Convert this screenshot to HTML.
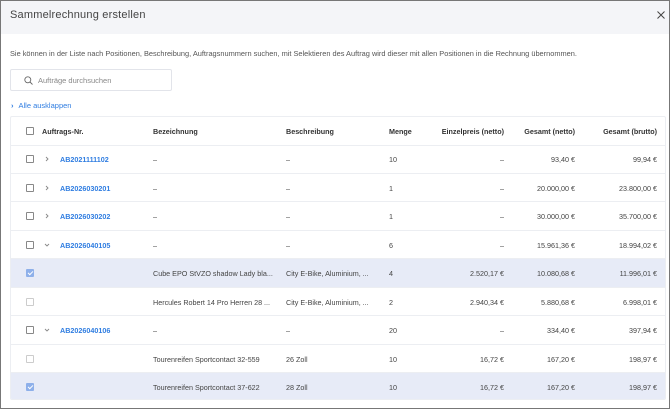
<!DOCTYPE html><html><head><style>
*{margin:0;padding:0;box-sizing:border-box}
body{width:670px;height:409px;overflow:hidden;background:#fff;font-family:"Liberation Sans",sans-serif;color:#333;position:relative}
.frame{position:absolute;inset:0;border:1px solid #777;}
.hd{position:absolute;left:1px;top:1px;right:1px;height:33px;background:#f4f5f8}
.title{position:absolute;left:10px;top:9px;font-size:11px;color:#444;letter-spacing:0.2px}
.x{position:absolute;right:5px;top:11px}
.desc{position:absolute;left:10px;top:49px;font-size:7.4px;color:#555}
.search{position:absolute;left:10px;top:69px;width:162px;height:22px;border:1px solid #e2e4ea;border-radius:2px}
.search span{position:absolute;left:27px;top:6px;font-size:7.5px;color:#888}
.all{position:absolute;left:11px;top:101px;font-size:7.5px;color:#2f7de1}
.tbl{position:absolute;left:10px;top:116px;width:656px;height:284px;border:1px solid #eceef2;border-radius:2px;overflow:hidden}
.r{position:absolute;left:0;width:656px;height:28.5px;border-bottom:1px solid #eceef2;font-size:7.2px;color:#444}
.r.sel{background:#e7ebf7}
.r div{position:absolute;top:10px;white-space:nowrap}
.r.h div{font-weight:bold;color:#333}
.r svg{position:absolute;left:33px;top:11px}
.cb{position:absolute;left:15px;top:10px;width:8px;height:8px;border:1px solid #888;border-radius:1px;background:#fff}
.cb.l{border-color:#ccc}
.cb.c{background:#8eb0ea;border-color:#8eb0ea}
.cb.c::after{content:"";position:absolute;left:2px;top:0px;width:2px;height:4px;border:solid #fff;border-width:0 1px 1px 0;transform:rotate(45deg)}
.a{color:#2f7de1;font-weight:bold}
.rt{text-align:right}
</style></head><body>
<div class="hd"></div>
<div class="title">Sammelrechnung erstellen</div>
<svg class="x" width="8" height="8" viewBox="0 0 8 8"><path d="M0.5 0.5L7.5 7.5M7.5 0.5L0.5 7.5" stroke="#444" stroke-width="1"/></svg>
<div class="desc">Sie können in der Liste nach Positionen, Beschreibung, Auftragsnummern suchen, mit Selektieren des Auftrag wird dieser mit allen Positionen in die Rechnung übernommen.</div>
<div class="search"><svg style="position:absolute;left:13px;top:6px" width="9" height="9" viewBox="0 0 9 9"><circle cx="3.8" cy="3.8" r="3" fill="none" stroke="#666" stroke-width="0.9"/><path d="M6 6L8.5 8.5" stroke="#666" stroke-width="0.9"/></svg><span>Aufträge durchsuchen</span></div>
<div class="all"><span style="font-weight:bold;margin-right:5px">›</span>Alle ausklappen</div>
<div class="tbl">
<div class="r h" style="top:0"><span class="cb"></span><div style="left:31px">Auftrags-Nr.</div><div style="left:142px">Bezeichnung</div><div style="left:275px">Beschreibung</div><div style="left:378px">Menge</div><div class="rt" style="right:163px">Einzelpreis (netto)</div><div class="rt" style="right:92px">Gesamt (netto)</div><div class="rt" style="right:10px">Gesamt (brutto)</div></div>

<div class="r" style="top:28px"><span class="cb"></span><svg width="6" height="6" viewBox="0 0 6 6"><path d="M2 1L4 3L2 5" fill="none" stroke="#888" stroke-width="0.9"/></svg><div class="a" style="left:49px">AB2021111102</div><div style="left:142px">–</div><div style="left:275px">–</div><div style="left:378px">10</div><div style="right:163px">–</div><div style="right:92px">93,40 €</div><div style="right:10px">99,94 €</div></div>

<div class="r" style="top:56.5px"><span class="cb"></span><svg width="6" height="6" viewBox="0 0 6 6"><path d="M2 1L4 3L2 5" fill="none" stroke="#888" stroke-width="0.9"/></svg><div class="a" style="left:49px">AB2026030201</div><div style="left:142px">–</div><div style="left:275px">–</div><div style="left:378px">1</div><div style="right:163px">–</div><div style="right:92px">20.000,00 €</div><div style="right:10px">23.800,00 €</div></div>

<div class="r" style="top:85px"><span class="cb"></span><svg width="6" height="6" viewBox="0 0 6 6"><path d="M2 1L4 3L2 5" fill="none" stroke="#888" stroke-width="0.9"/></svg><div class="a" style="left:49px">AB2026030202</div><div style="left:142px">–</div><div style="left:275px">–</div><div style="left:378px">1</div><div style="right:163px">–</div><div style="right:92px">30.000,00 €</div><div style="right:10px">35.700,00 €</div></div>

<div class="r" style="top:113.5px"><span class="cb"></span><svg width="6" height="6" viewBox="0 0 6 6"><path d="M1 2L3 4L5 2" fill="none" stroke="#888" stroke-width="0.9"/></svg><div class="a" style="left:49px">AB2026040105</div><div style="left:142px">–</div><div style="left:275px">–</div><div style="left:378px">6</div><div style="right:163px">–</div><div style="right:92px">15.961,36 €</div><div style="right:10px">18.994,02 €</div></div>

<div class="r sel" style="top:142px"><span class="cb c"></span><div style="left:142px">Cube EPO StVZO shadow Lady bla...</div><div style="left:275px">City E-Bike, Aluminium, ...</div><div style="left:378px">4</div><div style="right:163px">2.520,17 €</div><div style="right:92px">10.080,68 €</div><div style="right:10px">11.996,01 €</div></div>

<div class="r" style="top:170.5px"><span class="cb l"></span><div style="left:142px">Hercules Robert 14 Pro Herren 28 ...</div><div style="left:275px">City E-Bike, Aluminium, ...</div><div style="left:378px">2</div><div style="right:163px">2.940,34 €</div><div style="right:92px">5.880,68 €</div><div style="right:10px">6.998,01 €</div></div>

<div class="r" style="top:199px"><span class="cb"></span><svg width="6" height="6" viewBox="0 0 6 6"><path d="M1 2L3 4L5 2" fill="none" stroke="#888" stroke-width="0.9"/></svg><div class="a" style="left:49px">AB2026040106</div><div style="left:142px">–</div><div style="left:275px">–</div><div style="left:378px">20</div><div style="right:163px">–</div><div style="right:92px">334,40 €</div><div style="right:10px">397,94 €</div></div>

<div class="r" style="top:227.5px"><span class="cb l"></span><div style="left:142px">Tourenreifen Sportcontact 32-559</div><div style="left:275px">26 Zoll</div><div style="left:378px">10</div><div style="right:163px">16,72 €</div><div style="right:92px">167,20 €</div><div style="right:10px">198,97 €</div></div>

<div class="r sel" style="top:256px;border-bottom:none"><span class="cb c"></span><div style="left:142px">Tourenreifen Sportcontact 37-622</div><div style="left:275px">28 Zoll</div><div style="left:378px">10</div><div style="right:163px">16,72 €</div><div style="right:92px">167,20 €</div><div style="right:10px">198,97 €</div></div>
</div>
<div class="frame"></div>
</body></html>
